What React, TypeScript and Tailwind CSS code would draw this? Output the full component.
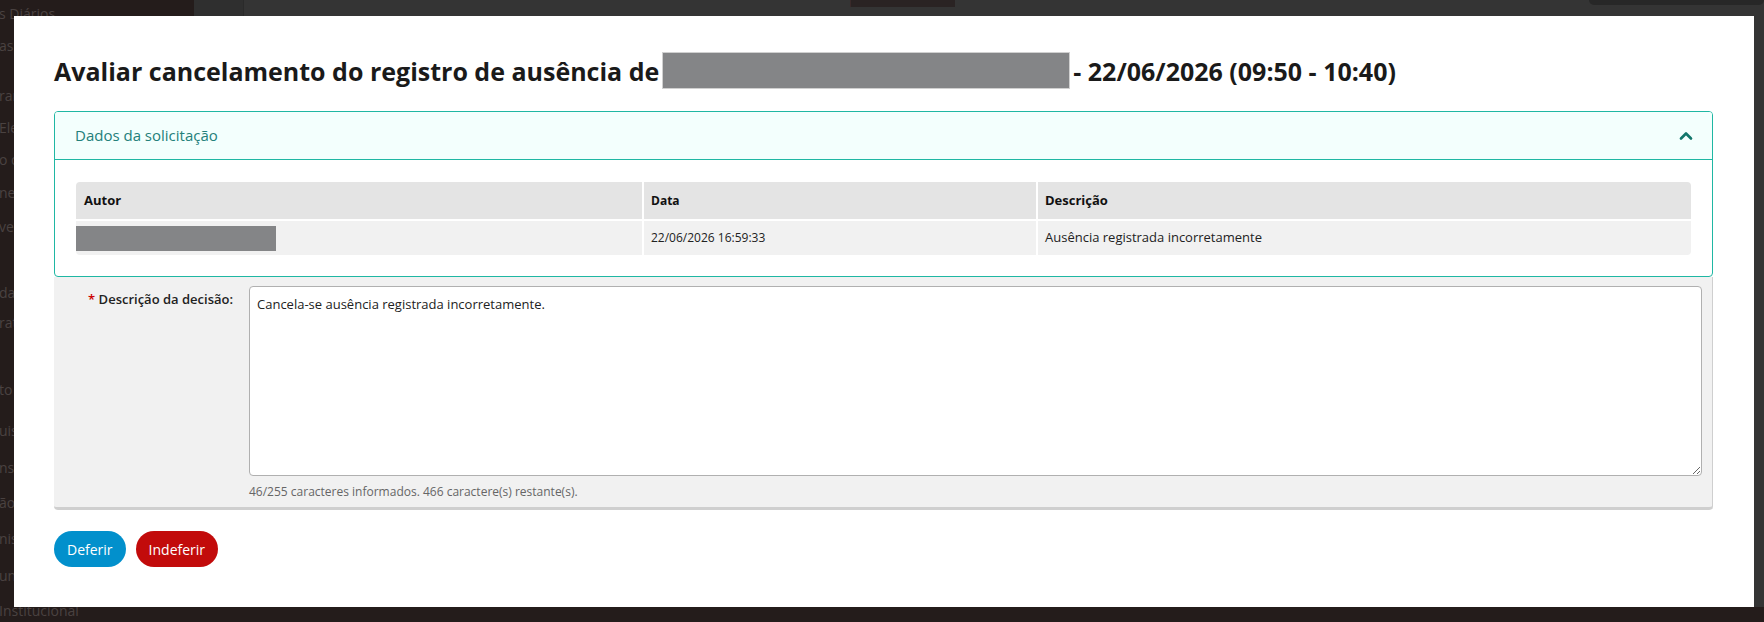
import { ChevronUp } from 'lucide-react';

const sideItems = [
  { label: 's Diários', top: 'mt-[4px]' },
  { label: 'as', top: 'mt-[12px]' },
  { label: 'rar', top: 'mt-[30px]' },
  { label: 'Ele', top: 'mt-[12px]' },
  { label: 'o d', top: 'mt-[12px]' },
  { label: 'ne', top: 'mt-[13px]' },
  { label: 've', top: 'mt-[14px]' },
  { label: 'dad', top: 'mt-[46px]' },
  { label: 'rat', top: 'mt-[10px]' },
  { label: 'to', top: 'mt-[47px]' },
  { label: 'uis', top: 'mt-[21px]' },
  { label: 'nsã', top: 'mt-[17px]' },
  { label: 'ão', top: 'mt-[15px]' },
  { label: 'nis', top: 'mt-[16px]' },
  { label: 'un', top: 'mt-[17px]' },
  { label: 'Institucional', top: 'mt-[15px]' },
];

function Backdrop() {
  return (
    <div className="flex h-full">
      {/* Left menu, dimmed by the overlay */}
      <aside className="w-[194px] shrink-0 bg-[#241c1b] text-[14px] leading-[20px] text-[#4a4241]">
        {sideItems.map((item) => (
          <div key={item.label} className={`${item.top} -ml-[1px] whitespace-nowrap`}>
            {item.label}
          </div>
        ))}
      </aside>
      <div className="flex flex-1 flex-col">
        <div className="flex h-[607px] bg-[#343434]">
          <div className="w-[50px] border-r border-[#2a2a2a] bg-[#2f2f2f]" />
          <div className="ml-[606px] h-[7px] w-[105px] border-l border-[#3a2a2a] bg-[#2a2323]" />
          <div className="ml-auto h-[5px] w-[175px] rounded-b-[10px] bg-[#272727]" />
        </div>
        <div className="flex-1 bg-[#241c1b]" />
      </div>
    </div>
  );
}

function RequestPanel() {
  return (
    <div className="overflow-hidden rounded-[4px] border border-[#1fb7a3] bg-white">
      <div className="flex h-[48px] items-center justify-between border-b border-[#1fb7a3] bg-[#f3fffd] pl-[20px] pr-[16px]">
        <span className="text-[15px] text-[#23807a]">Dados da solicitação</span>
        <ChevronUp className="h-[20px] w-[20px] text-[#12766b]" strokeWidth={3.2} />
      </div>
      <div className="px-[21px] pb-[21px] pt-[22px]">
        <div className="overflow-hidden rounded-[4px] text-[13px] text-[#222]">
          <div className="grid h-[37px] grid-cols-[566px_394px_1fr] items-center bg-[#e4e4e4] font-bold text-[#111]">
            <div className="pl-[8px]">Autor</div>
            <div className="flex h-full items-center border-l-2 border-white pl-[7px] text-[12px]">Data</div>
            <div className="flex h-full items-center border-l-2 border-white pl-[7px]">Descrição</div>
          </div>
          <div className="grid h-[36px] grid-cols-[566px_394px_1fr] items-center border-t-2 border-white bg-[#f1f1f1]">
            <div className="flex h-full items-center">
              <div className="h-[25px] w-[200px] bg-[#848587]" />
            </div>
            <div className="flex h-full items-center border-l-2 border-white pl-[7px] text-[12px]">
              22/06/2026 16:59:33
            </div>
            <div className="flex h-full items-center border-l-2 border-white pl-[7px]">
              Ausência registrada incorretamente
            </div>
          </div>
        </div>
      </div>
    </div>
  );
}

function DecisionForm() {
  return (
    <div className="flex rounded-b-[4px] border-b-[3px] border-r border-[#cfcfcf] bg-[#f1f1f1] pb-[6px] pr-[10px] pt-[9px]">
      <label className="w-[180px] shrink-0 pr-[1px] pt-[4px] text-right text-[13px] font-semibold text-[#222]">
        <span className="text-[#c00]">*</span> Descrição da decisão:
      </label>
      <div className="ml-[15px] flex-1">
        <textarea
          className="block h-[190px] w-full resize-y rounded-[4px] border border-[#b0b0b0] bg-white px-[7px] pt-[8px] text-[13px] text-[#222] outline-none"
          defaultValue="Cancela-se ausência registrada incorretamente."
        />
        <div className="mt-[7px] text-[12px] text-[#666]">
          46/255 caracteres informados. 466 caractere(s) restante(s).
        </div>
      </div>
    </div>
  );
}

export default function App() {
  return (
    <div className="relative h-[622px] w-full overflow-hidden bg-[#241c1b] font-['Open_Sans',sans-serif]">
      <Backdrop />

      {/* Modal */}
      <div className="absolute left-[14px] top-[16px] h-[591px] w-[1740px] bg-white pl-[40px] pr-[41px] pt-[36px]">
        <h1 className="flex items-center text-[25px] font-bold leading-[34px] text-[#1a1a1a]">
          <span>Avaliar cancelamento do registro de ausência de</span>
          <span className="mx-[3px] inline-block h-[37px] w-[408px] border border-[#d0d0d0] bg-[#848587]" />
          <span>- 22/06/2026 (09:50 - 10:40)</span>
        </h1>

        <div className="mt-[22px]">
          <RequestPanel />
          <DecisionForm />
        </div>

        <div className="mt-[21px] flex gap-[10px]">
          <button className="h-[36px] rounded-full bg-[#0290cc] px-[13px] text-[14px] text-white">Deferir</button>
          <button className="h-[36px] rounded-full bg-[#c20b0b] px-[13px] text-[14px] text-white">Indeferir</button>
        </div>
      </div>
    </div>
  );
}
